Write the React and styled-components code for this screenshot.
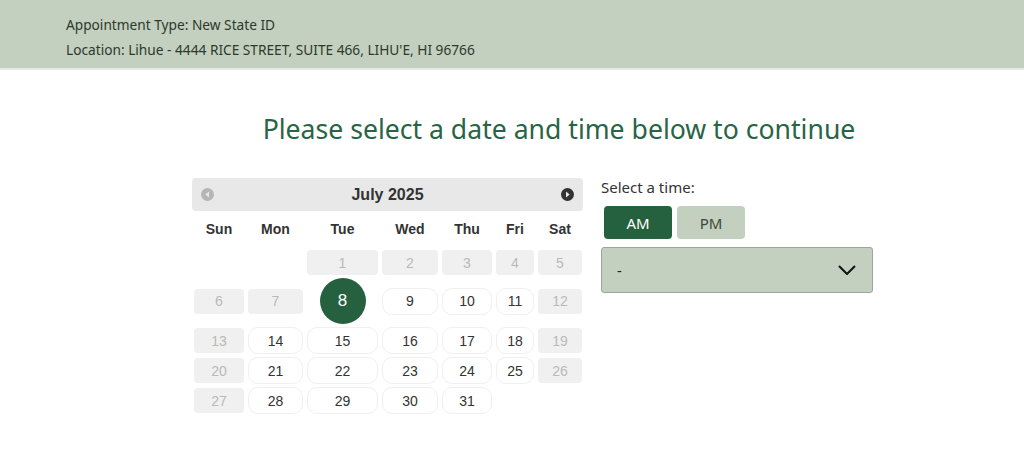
import React from 'react'
import styled, { createGlobalStyle } from 'styled-components'

const GlobalStyle = createGlobalStyle`
    body {
        margin: 0;
        background: #fff;
        font-family: "Noto Sans", "Liberation Sans", sans-serif;
    }
`;

const InfoBar = styled.div`
    height: 70px;
    box-sizing: border-box;
    padding: 12px 0 0 66px;
    background: #c3cfbf;
    border-bottom: 2px solid #e4e9e2;
    & > p {
        margin: 0;
        font-size: 13.7px;
        line-height: 25px;
        color: #2c3a2c;
    }
`;

const Main = styled.div`
    width: 734px;
    margin-left: 192px;
`;

const Title = styled.h1`
    margin: 43px 0 0 0;
    text-align: center;
    font-size: 26.6px;
    font-weight: 400;
    line-height: 32px;
    color: #2a6446;
    white-space: nowrap;
`;

const Body = styled.div`
    display: flex;
    gap: 18px;
    margin-top: 33px;
`;

const Calendar = styled.div`
    width: 391px;
    font-family: "Liberation Sans", Arial, sans-serif;
`;

const CalHead = styled.div`
    height: 33px;
    background: #e8e8e8;
    border-radius: 4px;
    display: flex;
    align-items: center;
    justify-content: space-between;
    padding: 0 9px;
    box-sizing: border-box;
    & > span {
        font-size: 16px;
        font-weight: 700;
        color: #333;
    }
`;

const Grid = styled.div`
    display: grid;
    grid-template-columns: 50px 55px 71px 56px 50px 38px 44px;
    column-gap: 4px;
    row-gap: 3px;
    padding-left: 2px;
    align-items: center;
`;

const DayName = styled.div`
    text-align: center;
    font-size: 14px;
    font-weight: 700;
    color: #333;
    line-height: 20px;
    margin: 8px 0 8px;
`;

const Cell = styled.div`
    height: ${p => (p.$off ? '25px' : '27px')};
    box-sizing: border-box;
    display: flex;
    align-items: center;
    justify-content: center;
    font-size: 14px;
    border-radius: ${p => (p.$off ? '4px' : '10px')};
    border: ${p => (p.$off ? 'none' : '1px solid #f0f0f0')};
    background: ${p => (p.$off ? '#f0f0f0' : '#fff')};
    color: ${p => (p.$off ? '#b9b9b9' : '#333')};
`;

const Selected = styled.div`
    width: 46px;
    height: 46px;
    border-radius: 50%;
    background: #25613f;
    color: #fff;
    font-size: 17px;
    display: flex;
    align-items: center;
    justify-content: center;
    justify-self: center;
`;

const TimePanel = styled.div`
    width: 272px;
`;

const Label = styled.div`
    font-size: 15px;
    line-height: 18px;
    color: #333;
`;

const Toggle = styled.div`
    display: flex;
    gap: 5px;
    margin: 10px 0 0 3px;
`;

const ToggleBtn = styled.button`
    width: 68px;
    height: 33px;
    border: none;
    border-radius: 4px;
    font-family: inherit;
    font-size: 15px;
    background: ${p => (p.$active ? '#25613f' : '#c3cfbf')};
    color: ${p => (p.$active ? '#fff' : '#3a4a3a')};
`;

const Select = styled.div`
    margin-top: 8px;
    height: 46px;
    box-sizing: border-box;
    border: 1px solid #9ea69b;
    border-radius: 3px;
    background: #c3cfbf;
    display: flex;
    align-items: center;
    justify-content: space-between;
    padding: 0 16px 0 15px;
    font-size: 15px;
    color: #222;
`;

const NavIcon = ({ dir, color }) => (
    <svg width="13" height="13" viewBox="0 0 13 13">
        <circle cx="6.5" cy="6.5" r="6.5" fill={color} />
        {dir === 'prev'
            ? <polygon points="8,3.5 4.3,6.5 8,9.5" fill="#e8e8e8" />
            : <polygon points="5,3.5 8.7,6.5 5,9.5" fill="#e8e8e8" />}
    </svg>
);

const days = ['Sun', 'Mon', 'Tue', 'Wed', 'Thu', 'Fri', 'Sat'];
const offDays = [1, 2, 3, 4, 5, 6, 7, 12, 13, 19, 20, 26, 27];

const App = () => {
    const cells = [];
    cells.push(<div key="e1" />, <div key="e2" />);
    for (let d = 1; d <= 31; d++) {
        if (d === 8) {
            cells.push(<Selected key={d}>8</Selected>);
        } else {
            cells.push(<Cell key={d} $off={offDays.includes(d)}>{d}</Cell>);
        }
    }

    return (
        <>
            <GlobalStyle />
            <InfoBar>
                <p>Appointment Type: New State ID</p>
                <p>Location: Lihue - 4444 RICE STREET, SUITE 466, LIHU'E, HI 96766</p>
            </InfoBar>
            <Main>
                <Title>Please select a date and time below to continue</Title>
                <Body>
                    <Calendar>
                        <CalHead>
                            <NavIcon dir="prev" color="#b5b5b5" />
                            <span>July 2025</span>
                            <NavIcon dir="next" color="#333" />
                        </CalHead>
                        <Grid>
                            {days.map(d => <DayName key={d}>{d}</DayName>)}
                            {cells}
                        </Grid>
                    </Calendar>
                    <TimePanel>
                        <Label>Select a time:</Label>
                        <Toggle>
                            <ToggleBtn $active>AM</ToggleBtn>
                            <ToggleBtn>PM</ToggleBtn>
                        </Toggle>
                        <Select>
                            <span>-</span>
                            <svg width="18" height="10" viewBox="0 0 18 10">
                                <polyline points="1,1 9,9 17,1" fill="none" stroke="#111" strokeWidth="2" />
                            </svg>
                        </Select>
                    </TimePanel>
                </Body>
            </Main>
        </>
    )
}

export default App
